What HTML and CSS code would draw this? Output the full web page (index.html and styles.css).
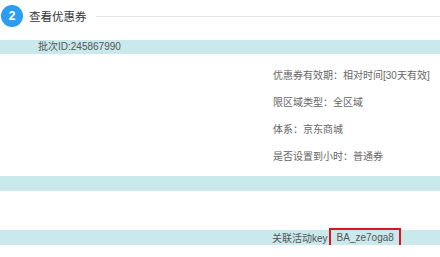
FILE: index.html
```html
<!DOCTYPE html>
<html lang="zh-CN">
<head>
    <meta charset="UTF-8">
    <title>查看优惠券</title>
    <link rel="stylesheet" href="styles.css">
</head>
<body>

    <div class="step-head">
        <span class="step-num">2</span>
        <span class="step-title">查看优惠券</span>
        <span class="step-line"></span>
    </div>

    <div class="band batch">批次ID:245867990</div>

    <div class="info">
        <div class="info-row">优惠券有效期：相对时间[30天有效]</div>
        <div class="info-row">限区域类型：全区域</div>
        <div class="info-row">体系：京东商城</div>
        <div class="info-row">是否设置到小时：普通券</div>
    </div>

    <div class="band empty"></div>

    <div class="band key-row">
        <span class="key-label">关联活动key</span>
        <span class="key-box">BA_ze7oga8</span>
    </div>

</body>
</html>
```

FILE: styles.css
```css
body {
    margin: 0;
    background-color: #fff;
    font-family: "Liberation Sans", "Noto Sans CJK SC", sans-serif;
    font-size: 10px;
    color: #666;
}
.step-head {
    display: flex;
    align-items: center;
    height: 32px;
}
.step-num {
    width: 22px;
    height: 22px;
    margin-left: 1px;
    border-radius: 50%;
    background-color: #2b9ef2;
    color: #fff;
    font-size: 12px;
    font-weight: bold;
    line-height: 22px;
    text-align: center;
}
.step-title {
    margin-left: 6px;
    font-size: 11.5px;
    color: #333;
}
.step-line {
    flex: 1;
    height: 1px;
    margin-left: 9px;
    background-color: #e6e6e6;
}
.band {
    background-color: #c9e9ec;
    color: #555;
}
.batch {
    margin-top: 8px;
    height: 14px;
    line-height: 14px;
    padding-left: 38px;
}
.info {
    margin-top: 8px;
    padding-left: 273px;
}
.info-row {
    height: 27px;
    line-height: 27px;
}
.empty {
    margin-top: 6px;
    height: 15px;
}
.key-row {
    margin-top: 39px;
    height: 15px;
    display: flex;
    align-items: center;
    padding-left: 272px;
}
.key-box {
    box-sizing: border-box;
    height: 19px;
    line-height: 15px;
    margin-left: 1px;
    padding: 0 5px 0 6px;
    border: 2px solid #e0141e;
}
```
